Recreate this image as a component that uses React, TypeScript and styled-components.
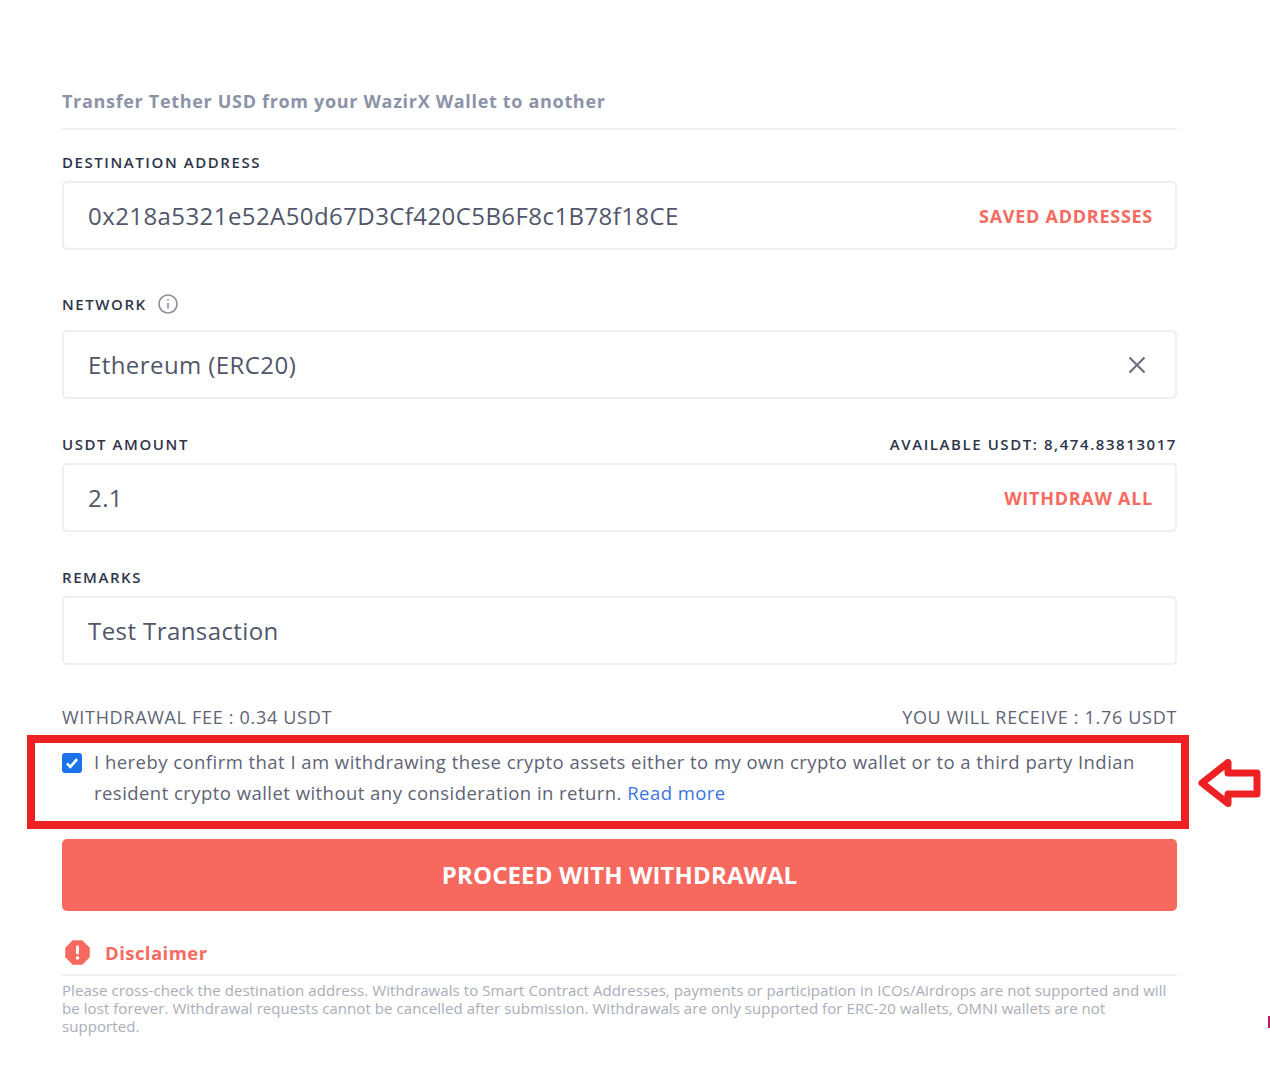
import React from "react";
import styled, { createGlobalStyle } from "styled-components";

const GlobalStyle = createGlobalStyle`
  html, body {
    margin: 0;
    padding: 0;
    background: #ffffff;
  }
  body {
    font-family: "Open Sans", "Noto Sans", sans-serif;
  }
`;

const Page = styled.div`
  position: relative;
  width: 1270px;
  height: 1066px;
  overflow: hidden;
  box-sizing: border-box;
  padding: 90px 93px 0 62px;
`;

const Title = styled.div`
  font-size: 18px;
  line-height: 23px;
  font-weight: 700;
  letter-spacing: 0.68px;
  color: #8c93a8;
  padding-bottom: 15px;
  border-bottom: 2px solid #eff0f2;
`;

const LabelRow = styled.div<{ $top: number; $gap: number }>`
  display: flex;
  align-items: center;
  justify-content: space-between;
  height: 20px;
  margin-top: ${(p) => p.$top}px;
  margin-bottom: ${(p) => p.$gap}px;
`;

const LabelLeft = styled.div`
  display: flex;
  align-items: center;
  gap: 10px;
`;

const Label = styled.span`
  font-size: 15px;
  font-weight: 600;
  letter-spacing: 1.57px;
  color: #2f3549;
  text-transform: uppercase;
`;

const Field = styled.div`
  box-sizing: border-box;
  height: 69px;
  display: flex;
  align-items: center;
  justify-content: space-between;
  padding: 0 22px 0 24px;
  border: 2px solid #eeeff2;
  border-radius: 5px;
`;

const Value = styled.span`
  font-size: 24px;
  letter-spacing: 0.42px;
  color: #50566a;
`;

const FieldAction = styled.span`
  font-size: 18px;
  font-weight: 700;
  letter-spacing: 0.73px;
  color: #f8695f;
  text-transform: uppercase;
`;

const ClearIcon = styled.svg`
  width: 20px;
  height: 20px;
  margin-right: 6px;
  color: #6b7081;
`;

const FeeRow = styled.div`
  display: flex;
  justify-content: space-between;
  height: 24px;
  margin-top: 40px;
  font-size: 18px;
  line-height: 24px;
  letter-spacing: 0.69px;
  color: #5e6375;
`;

const ConfirmBox = styled.div`
  position: relative;
  box-sizing: border-box;
  height: 94px;
  margin: 6px -12px 0 -35px;
  border: 8px solid #ed2024;
  padding: 3px 40px 0 27px;
  display: flex;
  gap: 12px;
`;

const Check = styled.span`
  flex: none;
  width: 20px;
  height: 20px;
  margin-top: 7px;
  border-radius: 3px;
  background: #1a73e8;
  display: flex;
  align-items: center;
  justify-content: center;
`;

const ConfirmText = styled.div`
  font-size: 18.5px;
  line-height: 31px;
  letter-spacing: 0.455px;
  color: #5e6375;
  white-space: nowrap;
`;

const ReadMore = styled.a`
  color: #3b74e0;
`;

const Arrow = styled.svg`
  position: absolute;
  left: 1163px;
  top: 16px;
  width: 66px;
  height: 50px;
`;

const Proceed = styled.button`
  display: block;
  width: 100%;
  height: 72px;
  margin-top: 10px;
  padding: 0 0 2px;
  border: none;
  border-radius: 5px;
  background: #f7685e;
  color: #ffffff;
  font-family: inherit;
  font-size: 24px;
  font-weight: 700;
  letter-spacing: 0.12px;
  text-transform: uppercase;
`;

const DisclaimerHead = styled.div`
  display: flex;
  align-items: center;
  gap: 15px;
  height: 44px;
  margin-top: 21px;
  padding: 0 0 1px 3px;
  border-bottom: 2px solid #eff0f2;
  box-sizing: border-box;
`;

const DisclaimerTitle = styled.span`
  font-size: 18.5px;
  font-weight: 700;
  letter-spacing: 0.45px;
  color: #f8695f;
`;

const DisclaimerText = styled.p`
  margin: 5px 0 0;
  font-size: 15px;
  line-height: 18px;
  letter-spacing: 0.07px;
  color: #a9adb9;
`;

const Tick = styled.span`
  position: absolute;
  left: 1268px;
  top: 1016px;
  width: 2px;
  height: 12px;
  background: #c2185b;
`;

export default function App() {
  return (
    <Page>
      <GlobalStyle />
      <Title>Transfer Tether USD from your WazirX Wallet to another</Title>

      <LabelRow $top={22} $gap={9}>
        <Label>Destination Address</Label>
      </LabelRow>
      <Field>
        <Value>0x218a5321e52A50d67D3Cf420C5B6F8c1B78f18CE</Value>
        <FieldAction>Saved Addresses</FieldAction>
      </Field>

      <LabelRow $top={44} $gap={16}>
        <LabelLeft>
          <Label>Network</Label>
          <svg width="22" height="22" viewBox="0 0 22 22" fill="none" stroke="#8b8f9c" strokeWidth="1.6">
            <circle cx="11" cy="11" r="9" />
            <path d="M11 10v5.5" />
            <path d="M11 6.2v1.6" />
          </svg>
        </LabelLeft>
      </LabelRow>
      <Field>
        <Value>Ethereum (ERC20)</Value>
        <ClearIcon viewBox="0 0 20 20" fill="none" stroke="currentColor" strokeWidth="2.2">
          <path d="M2.5 2.5l15 15M17.5 2.5l-15 15" />
        </ClearIcon>
      </Field>

      <LabelRow $top={35} $gap={9}>
        <Label>USDT Amount</Label>
        <Label>Available USDT: 8,474.83813017</Label>
      </LabelRow>
      <Field>
        <Value>2.1</Value>
        <FieldAction>Withdraw All</FieldAction>
      </Field>

      <LabelRow $top={35} $gap={9}>
        <Label>Remarks</Label>
      </LabelRow>
      <Field>
        <Value>Test Transaction</Value>
      </Field>

      <FeeRow>
        <span>WITHDRAWAL FEE : 0.34 USDT</span>
        <span>YOU WILL RECEIVE : 1.76 USDT</span>
      </FeeRow>

      <ConfirmBox>
        <Check>
          <svg width="14" height="14" viewBox="0 0 14 14" fill="none" stroke="#ffffff" strokeWidth="2.6">
            <path d="M2 7.5l3.4 3.4L12 3.2" />
          </svg>
        </Check>
        <ConfirmText>
          I hereby confirm that I am withdrawing these crypto assets either to my own crypto wallet or to a third party Indian
          <br />
          resident crypto wallet without any consideration in return. <ReadMore>Read more</ReadMore>
        </ConfirmText>
        <Arrow viewBox="0 0 66 50" fill="none" stroke="#ed2024" strokeWidth="7" strokeLinejoin="round">
          <path d="M4 24L30 3.5V14H59V35H30V44.5Z" />
        </Arrow>
      </ConfirmBox>

      <Proceed>Proceed with withdrawal</Proceed>

      <DisclaimerHead>
        <svg width="25" height="25" viewBox="0 0 25 25">
          <path d="M8 1h9l7 7v9l-7 7H8l-7-7V8z" fill="#f8695f" stroke="#f8695f" strokeLinejoin="round" strokeWidth="1.5" />
          <rect x="11" y="5.5" width="3" height="9" rx="1.4" fill="#ffffff" />
          <circle cx="12.5" cy="18" r="1.8" fill="#ffffff" />
        </svg>
        <DisclaimerTitle>Disclaimer</DisclaimerTitle>
      </DisclaimerHead>
      <DisclaimerText>
        Please cross-check the destination address. Withdrawals to Smart Contract Addresses, payments or participation in ICOs/Airdrops are not supported and will be lost forever. Withdrawal requests cannot be cancelled after submission. Withdrawals are only supported for ERC-20 wallets, OMNI wallets are not supported.
      </DisclaimerText>
      <Tick />
    </Page>
  );
}
